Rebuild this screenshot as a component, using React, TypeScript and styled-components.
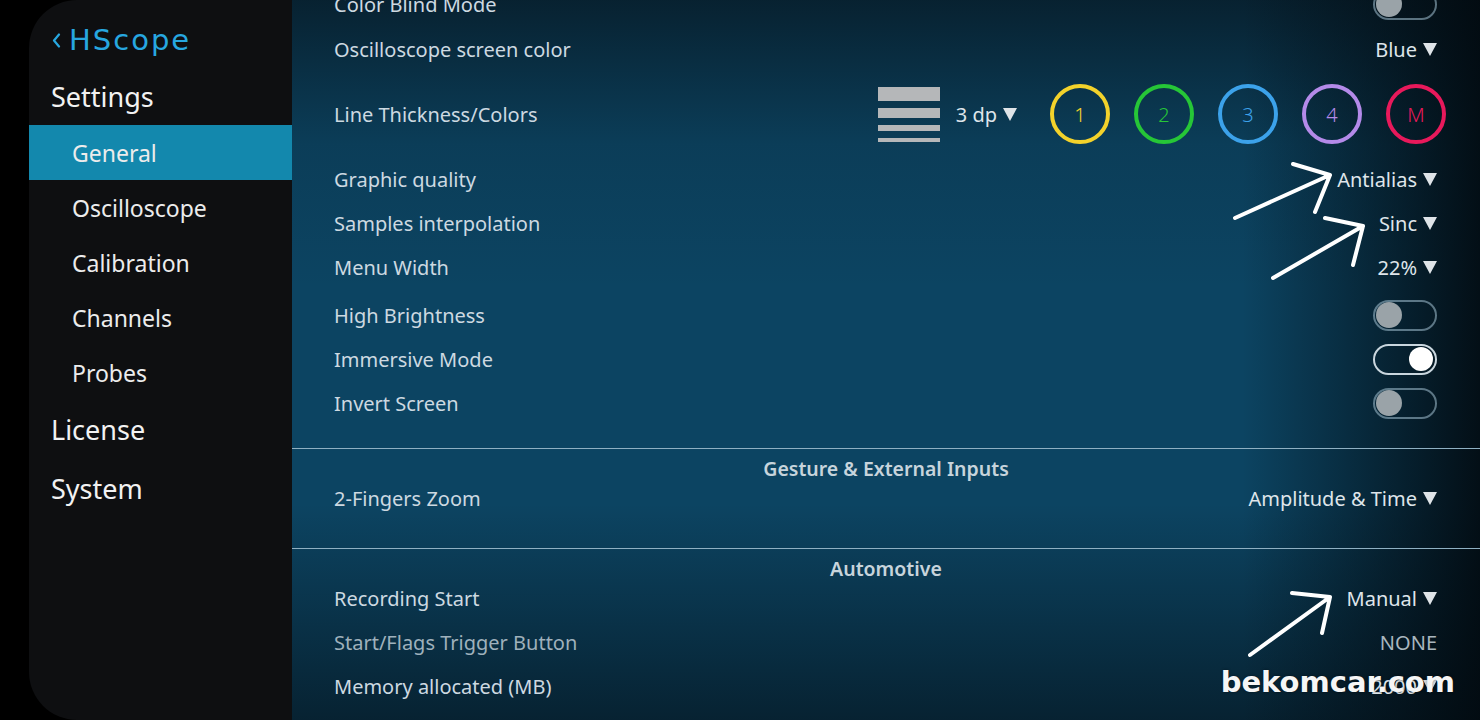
import styled, { createGlobalStyle } from 'styled-components'

const Global = createGlobalStyle`
    html, body {
        margin: 0;
        padding: 0;
        background: #000;
        overflow: hidden;
    }
    * {
        box-sizing: border-box;
    }
`

const Screen = styled.div`
    width: 1480px;
    height: 720px;
    display: flex;
    background: #000;
    padding-left: 29px;
    font-family: "Noto Sans", "Open Sans", sans-serif;
`

const Sidebar = styled.nav`
    width: 263px;
    height: 720px;
    flex-shrink: 0;
    background: #0e0f11;
    border-top-left-radius: 48px;
    border-bottom-left-radius: 48px;
    display: flex;
    flex-direction: column;
`

const Logo = styled.div`
    height: 68px;
    display: flex;
    align-items: center;
    padding: 12px 0 0 23px;
    gap: 8px;
    color: #27a7e0;
`

const LogoText = styled.span`
    font-family: "DejaVu Sans", sans-serif;
    font-size: 29px;
    letter-spacing: 2px;
    line-height: 1;
`

const TopItem = styled.div<{ $h: number }>`
    height: ${p => p.$h}px;
    display: flex;
    align-items: center;
    padding-left: 22px;
    font-size: 27px;
    color: #f2f2f2;
`

const SubItem = styled.div<{ $active?: boolean }>`
    height: 55px;
    display: flex;
    align-items: center;
    padding-left: 43px;
    font-size: 23px;
    color: #ececec;
    background: ${p => (p.$active ? '#1388ad' : 'transparent')};
`

const Main = styled.main`
    flex: 1;
    height: 720px;
    position: relative;
    overflow: hidden;
    display: flex;
    flex-direction: column;
    background:
        linear-gradient(to right, rgba(2, 9, 14, 0) 0%, rgba(2, 9, 14, 0) 80%, rgba(2, 9, 14, 0.9) 100%),
        linear-gradient(to bottom, rgba(6, 22, 32, 0.75) 0%, rgba(6, 22, 32, 0.15) 20%, rgba(6, 22, 32, 0) 40%, rgba(6, 22, 32, 0) 70%, rgba(4, 16, 24, 0.65) 100%),
        #0c4462;
`

const Section = styled.section<{ $pad: number; $line?: boolean }>`
    display: flex;
    flex-direction: column;
    flex-shrink: 0;
    padding-bottom: ${p => p.$pad}px;
    border-bottom: ${p => (p.$line ? '1px solid #8fb0c2' : 'none')};
`

const Header = styled.div`
    text-align: center;
    font-size: 19.5px;
    font-weight: 600;
    line-height: 24px;
    margin-top: 8px;
    margin-bottom: -5px;
    color: #c7d4dc;
`

const Row = styled.div<{ $h?: number; $top?: number }>`
    height: ${p => p.$h ?? 44}px;
    margin-top: ${p => p.$top ?? 0}px;
    flex-shrink: 0;
    display: flex;
    align-items: center;
    justify-content: space-between;
    padding: 0 43px 0 42px;
`

const Label = styled.span<{ $dim?: boolean }>`
    font-size: 20px;
    color: ${p => (p.$dim ? '#9fb1bc' : '#cdd9e1')};
`

const Value = styled.span<{ $dim?: boolean }>`
    display: flex;
    align-items: center;
    font-size: 20px;
    color: ${p => (p.$dim ? '#a9b6be' : '#dfe5ea')};
`

const Caret = styled.span`
    display: inline-block;
    width: 0;
    height: 0;
    margin-left: 6px;
    border-left: 7.5px solid transparent;
    border-right: 7.5px solid transparent;
    border-top: 13px solid #dfe4e8;
`

const Toggle = styled.div<{ $on?: boolean }>`
    width: 64px;
    height: 31px;
    border-radius: 16px;
    border: 2px solid ${p => (p.$on ? '#c9d6de' : 'rgba(150, 180, 196, 0.6)')};
    display: flex;
    align-items: center;
    justify-content: ${p => (p.$on ? 'flex-end' : 'flex-start')};
    padding: 0 ${p => (p.$on ? 2 : 1)}px;
`

const Knob = styled.div<{ $on?: boolean }>`
    width: ${p => (p.$on ? 24 : 26)}px;
    height: ${p => (p.$on ? 24 : 26)}px;
    border-radius: 50%;
    background: ${p => (p.$on ? '#ffffff' : '#9aa3a8')};
`

const LineControls = styled.div`
    display: flex;
    align-items: center;
`

const Thickness = styled.div`
    width: 62px;
    display: flex;
    flex-direction: column;
    gap: 7px;
    margin-right: 16px;
`

const Bar = styled.div<{ $h: number }>`
    height: ${p => p.$h}px;
    background: #b5b7b9;
`

const Channels = styled.div`
    display: flex;
    gap: 24px;
    margin-left: 33px;
    margin-right: -9px;
`

const Channel = styled.div<{ $color: string }>`
    width: 60px;
    height: 60px;
    border-radius: 50%;
    border: 4px solid ${p => p.$color};
    color: ${p => p.$color};
    display: flex;
    align-items: center;
    justify-content: center;
    font-size: 20px;
    font-weight: 300;
`

const Marks = styled.svg`
    position: absolute;
    left: 0;
    top: 0;
    pointer-events: none;
`

const Watermark = styled.div`
    position: absolute;
    right: 25px;
    top: 668px;
    font-family: "DejaVu Sans", sans-serif;
    font-weight: bold;
    font-size: 29px;
    line-height: 29px;
    color: #f6f6f6;
    text-shadow: 0 0 3px rgba(0, 0, 0, 0.45);
`

function Chevron() {
    return (
        <svg width="9" height="15" viewBox="0 0 9 15">
            <polyline points="7,1.5 2,7.5 7,13.5" fill="none" stroke="#27a7e0" strokeWidth="2.2" strokeLinecap="round" strokeLinejoin="round" />
        </svg>
    )
}

function Select({ text }: { text: string }) {
    return (
        <Value>
            {text}
            <Caret />
        </Value>
    )
}

const channels = [
    { label: '1', color: '#f3d22b' },
    { label: '2', color: '#26c637' },
    { label: '3', color: '#3ca2ea' },
    { label: '4', color: '#b48ae9' },
    { label: 'M', color: '#e8195b' },
]

export default function App() {
    return (
        <Screen>
            <Global />
            <Sidebar>
                <Logo>
                    <Chevron />
                    <LogoText>HScope</LogoText>
                </Logo>
                <TopItem $h={57}>Settings</TopItem>
                <SubItem $active>General</SubItem>
                <SubItem>Oscilloscope</SubItem>
                <SubItem>Calibration</SubItem>
                <SubItem>Channels</SubItem>
                <SubItem>Probes</SubItem>
                <TopItem $h={58}>License</TopItem>
                <TopItem $h={60}>System</TopItem>
            </Sidebar>
            <Main>
                <Section $pad={23} $line>
                    <Row $top={-19} $h={46}>
                        <Label>Color Blind Mode</Label>
                        <Toggle><Knob /></Toggle>
                    </Row>
                    <Row>
                        <Label>Oscilloscope screen color</Label>
                        <Select text="Blue" />
                    </Row>
                    <Row $h={86}>
                        <Label>Line Thickness/Colors</Label>
                        <LineControls>
                            <Thickness>
                                <Bar $h={14} />
                                <Bar $h={10} />
                                <Bar $h={6} />
                                <Bar $h={4} />
                            </Thickness>
                            <Select text="3 dp" />
                            <Channels>
                                {channels.map(c => (
                                    <Channel key={c.label} $color={c.color}>{c.label}</Channel>
                                ))}
                            </Channels>
                        </LineControls>
                    </Row>
                    <Row>
                        <Label>Graphic quality</Label>
                        <Select text="Antialias" />
                    </Row>
                    <Row>
                        <Label>Samples interpolation</Label>
                        <Select text="Sinc" />
                    </Row>
                    <Row>
                        <Label>Menu Width</Label>
                        <Select text="22%" />
                    </Row>
                    <Row $top={4}>
                        <Label>High Brightness</Label>
                        <Toggle><Knob /></Toggle>
                    </Row>
                    <Row>
                        <Label>Immersive Mode</Label>
                        <Toggle $on><Knob $on /></Toggle>
                    </Row>
                    <Row>
                        <Label>Invert Screen</Label>
                        <Toggle><Knob /></Toggle>
                    </Row>
                </Section>
                <Section $pad={28} $line>
                    <Header>Gesture &amp; External Inputs</Header>
                    <Row>
                        <Label>2-Fingers Zoom</Label>
                        <Select text="Amplitude & Time" />
                    </Row>
                </Section>
                <Section $pad={0}>
                    <Header>Automotive</Header>
                    <Row>
                        <Label>Recording Start</Label>
                        <Select text="Manual" />
                    </Row>
                    <Row>
                        <Label $dim>Start/Flags Trigger Button</Label>
                        <Value $dim>NONE</Value>
                    </Row>
                    <Row>
                        <Label>Memory allocated (MB)</Label>
                        <Select text="2000" />
                    </Row>
                </Section>
                <Marks width="1188" height="720" viewBox="292 0 1188 720">
                    <g fill="none" stroke="#ffffff" strokeWidth="4" strokeLinecap="round" strokeLinejoin="round">
                        <path d="M1235 218 L1330 175 M1293 164 L1330 175 L1315 212" />
                        <path d="M1273 278 L1363 226 M1325 218 L1363 226 L1353 265" />
                        <path d="M1250 655 L1330 597 M1292 593 L1330 597 L1322 633" />
                    </g>
                </Marks>
                <Watermark>bekomcar.com</Watermark>
            </Main>
        </Screen>
    )
}
